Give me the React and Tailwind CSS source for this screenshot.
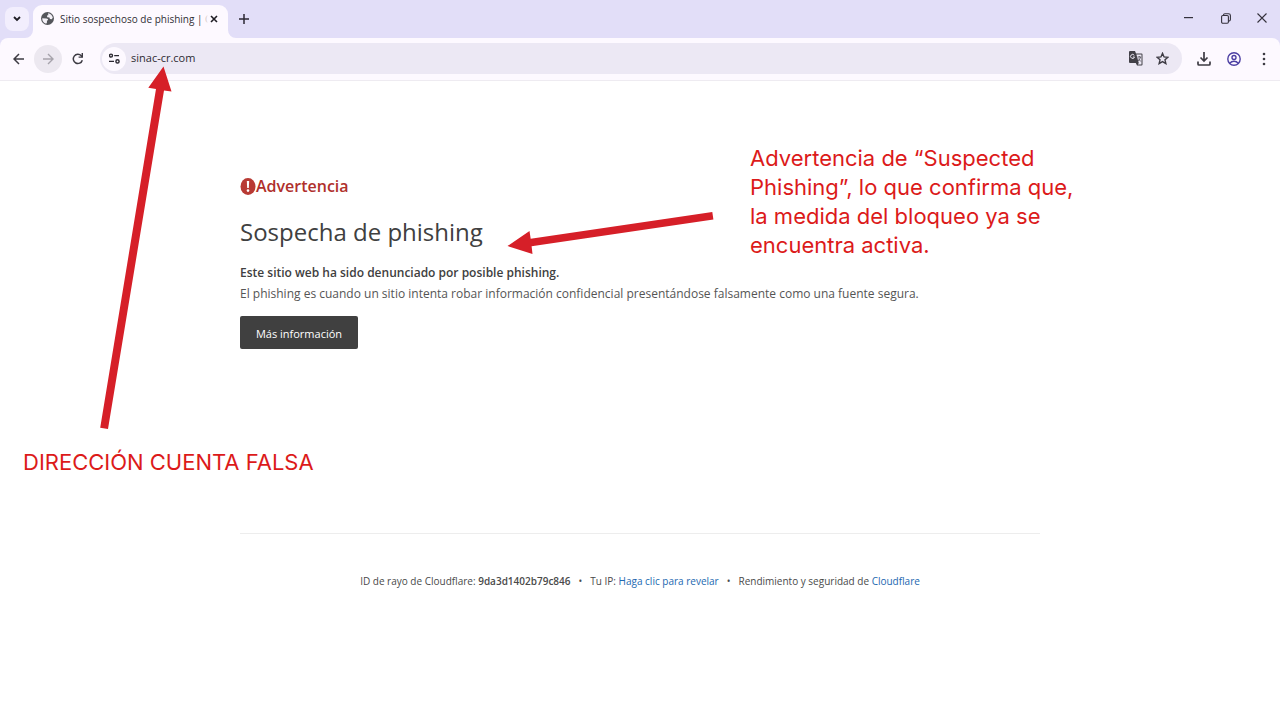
import React from "react";

function TabStrip() {
  return (
    <header className="flex h-[38px] items-end bg-[#e2def8]">
      <div className="flex h-full w-[33px] items-center justify-center pl-px">
        <button aria-label="Buscar pestañas" className="flex size-6 items-center justify-center rounded-lg bg-[#f2eefd]">
          <svg width="8" height="6" viewBox="0 0 8 6" fill="none" stroke="#1f1d24" strokeWidth="1.8"><path d="M1 1l3 3 3-3" /></svg>
        </button>
      </div>
      <div className="relative flex h-[33px] w-[195px] items-center rounded-t-[9px] bg-[#fdf9ff] pr-2 pl-2 pb-1.5">
        <svg className="absolute bottom-0 -left-2" width="8" height="8" viewBox="0 0 8 8" fill="#fdf9ff"><path d="M8 0v8H0a8 8 0 0 0 8-8z" /></svg>
        <svg className="absolute -right-2 bottom-0" width="8" height="8" viewBox="0 0 8 8" fill="#fdf9ff"><path d="M0 0v8h8a8 8 0 0 1-8-8z" /></svg>
        <svg className="mr-1.5 shrink-0" width="13" height="13" viewBox="0 0 24 24">
          <circle cx="12" cy="12" r="12" fill="#54565b" />
          <path d="M2.200 11.500l8 .3c2 .2 3 1.500 2.800 3.200l-2 .8v3.500l-1.500 2.300C5 20.500 2 16.500 2.200 11.500zM13 2.200c4.500.4 8.300 4 8.800 8.600l-2 2.700-3.300-.8-1-2.700-4-.5-.5-3 2.500-.7z" fill="#f4f1f8" />
        </svg>
        <span className="relative min-w-0 flex-1 overflow-hidden text-[10px] leading-4 whitespace-nowrap text-[#302e35]">
          Sitio sospechoso de phishing | C
          <span className="absolute inset-y-0 right-0 w-2 bg-linear-to-r from-transparent to-[#fdf9ff]" />
        </span>
        <button aria-label="Cerrar pestaña" className="flex size-3 shrink-0 items-center justify-center">
          <svg width="8" height="8" viewBox="0 0 8 8" stroke="#1f1d24" strokeWidth="1.6"><path d="M1 1l6 6M7 1L1 7" /></svg>
        </button>
      </div>
      <button aria-label="Nueva pestaña" className="ml-2 flex h-full w-4 items-center justify-center">
        <svg width="10" height="10" viewBox="0 0 10 10" stroke="#2c2933" strokeWidth="1.5"><path d="M5 0v10M0 5h10" /></svg>
      </button>
      <div className="ml-auto flex h-full items-start pt-2 text-[#34313c]">
        <button aria-label="Minimizar" className="flex h-5 w-[37px] items-center justify-center">
          <svg width="9" height="2" viewBox="0 0 9 2" fill="currentColor"><path d="M0 0h9v1.200H0z" /></svg>
        </button>
        <button aria-label="Restaurar" className="flex h-5 w-[37px] items-center justify-center">
          <svg width="10" height="11" viewBox="0 0 10 11" fill="none" stroke="currentColor" strokeWidth="1.100"><rect x=".6" y="2.500" width="6.800" height="7.800" rx="1.200" /><path d="M2.500 2.200C2.500 1.200 3 .7 4 .7h3.500c1.200 0 1.900.7 1.900 1.900v4c0 1-.6 1.600-1.700 1.700" /></svg>
        </button>
        <button aria-label="Cerrar" className="flex h-5 w-9 items-center justify-center">
          <svg width="10" height="10" viewBox="0 0 10 10" stroke="currentColor" strokeWidth="1.100"><path d="M.5.5l9 9M9.500.5l-9 9" /></svg>
        </button>
      </div>
    </header>
  );
}

function Toolbar() {
  return (
    <div className="bg-[#e2def8]">
      <nav className="flex h-[43px] items-center rounded-t-lg border-b border-[#eeebf1] bg-[#fdf9ff] pr-0.5 pb-px pl-1 text-[#3d3b43]">
        <button aria-label="Atrás" className="flex size-7 items-center justify-center">
          <svg width="11" height="12" viewBox="0 0 11 12" fill="none" stroke="currentColor" strokeWidth="1.500"><path d="M11 6H1M6 1L1 6l5 5" /></svg>
        </button>
        <button aria-label="Adelante" className="ml-0.5 flex size-7 items-center justify-center rounded-full bg-[#ece8f0] text-[#a6a3ab]">
          <svg width="11" height="12" viewBox="0 0 11 12" fill="none" stroke="currentColor" strokeWidth="1.400"><path d="M0 6h10M5 1l5 5-5 5" /></svg>
        </button>
        <button aria-label="Volver a cargar" className="ml-0.5 flex size-7 items-center justify-center">
          <svg width="12" height="12" viewBox="0 0 12 12"><path d="M10.300 7.200A4.600 4.600 0 1 1 9.300 2.800L10.400 4" fill="none" stroke="currentColor" strokeWidth="1.500" /><path d="M11 0v4.800H6.600V3.400h3V0z" fill="currentColor" /></svg>
        </button>
        <div className="ml-2 flex h-[31px] min-w-0 flex-1 items-center rounded-full bg-[#ece8f4] pr-3 pl-0.5">
          <button aria-label="Ver información del sitio" className="flex size-6 shrink-0 items-center justify-center rounded-full bg-[#fdf9ff]">
            <svg width="11" height="11" viewBox="0 0 11 11" fill="none" stroke="#2a2830" strokeWidth="1.400"><circle cx="2" cy="2.600" r="1.500" /><path d="M5.200 2.600H10M0 8.400h5" /><circle cx="8.500" cy="8.400" r="1.600" /></svg>
          </button>
          <input aria-label="Dirección" defaultValue="sinac-cr.com" className="ml-[5px] min-w-0 flex-1 bg-transparent text-[11px] text-[#2c2a32] outline-none" />
          <button aria-label="Traducir esta página" className="flex size-5 items-center justify-center">
            <svg width="14" height="15" viewBox="0 0 14 15"><path d="M1 0h5l1 2.500h5.500a1 1 0 0 1 1 1V13.500a1 1 0 0 1-1 1H8L6.800 12H1a1 1 0 0 1-1-1V1a1 1 0 0 1 1-1z" fill="#424047" /><path d="M7.400 3.500h5.100v10H8.800l1-1.500z" fill="#ece8f4" /><path d="M5.300 4.400A2 2 0 1 0 5.500 6H3.900" fill="none" stroke="#ece8f4" strokeWidth="1" /><path d="M8.600 6h3.500M10.300 5v1M11.500 6c-.3 1.800-1.200 3-2.300 4M9.200 7.500l2.600 3" fill="none" stroke="#55525c" strokeWidth=".9" /></svg>
          </button>
          <button aria-label="Añadir a marcadores" className="ml-2 flex size-4 items-center justify-center">
            <svg width="13" height="13" viewBox="0 0 24 24" fill="none" stroke="currentColor" strokeWidth="2.600"><path d="M12 2.500l2.900 6.600 7.100.6-5.400 4.700 1.600 7L12 17.700l-6.200 3.700 1.600-7L2 9.700l7.100-.6z" /></svg>
          </button>
        </div>
        <button aria-label="Descargas" className="ml-2 flex size-7 items-center justify-center">
          <svg width="14" height="14" viewBox="0 0 14 14" fill="none" stroke="currentColor" strokeWidth="1.700"><path d="M7 0v8.500M3.500 5.500L7 9l3.500-3.500M1 9.500V12a1 1 0 0 0 1 1h10a1 1 0 0 0 1-1V9.500" /></svg>
        </button>
        <button aria-label="Perfil" className="ml-0.5 flex size-7 items-center justify-center text-[#4c3fa3]">
          <svg width="14" height="14" viewBox="0 0 14 14" fill="none" stroke="currentColor" strokeWidth="1.400"><circle cx="7" cy="7" r="6.200" /><circle cx="7" cy="5.500" r="2" /><path d="M2.800 11.300C4 9.800 5.300 9.300 7 9.300s3 .5 4.200 2" /></svg>
        </button>
        <button aria-label="Menú" className="ml-0.5 flex size-7 items-center justify-center">
          <svg width="4" height="14" viewBox="0 0 4 14" fill="currentColor"><circle cx="2" cy="2" r="1.300" /><circle cx="2" cy="7" r="1.300" /><circle cx="2" cy="12" r="1.300" /></svg>
        </button>
      </nav>
    </div>
  );
}

function Warning() {
  return (
    <main className="px-60 pt-[93px] text-[#404040]">
      <p className="flex items-center text-base leading-6 font-semibold text-[#b0302c]">
        <svg width="16" height="17" viewBox="0 0 15 17"><ellipse cx="7.500" cy="8.500" rx="7.500" ry="8.500" fill="#b83a34" /><path d="M6.300 3h2.400l-.4 7H6.700z" fill="#fff" /><circle cx="7.500" cy="12.600" r="1.300" fill="#fff" /></svg>
        Advertencia
      </p>
      <h1 className="mt-4 text-2xl leading-9">Sospecha de phishing</h1>
      <p className="mt-3 text-xs leading-[21px] font-semibold">Este sitio web ha sido denunciado por posible phishing.</p>
      <p className="text-xs leading-[21px] text-[#555555]">El phishing es cuando un sitio intenta robar información confidencial presentándose falsamente como una fuente segura.</p>
      <button className="mt-3 h-[33px] w-[118px] rounded-xs bg-[#404040] pt-1 text-[11px] whitespace-nowrap text-white">Más información</button>
    </main>
  );
}

function Footer() {
  return (
    <footer className="mt-[184px] px-60">
      <p className="flex justify-center gap-2 border-t border-[#ededed] pt-[39px] text-[10px] leading-4 whitespace-nowrap text-[#4a4a4a]">
        <span>ID de rayo de Cloudflare: <strong className="font-semibold">9da3d1402b79c846</strong></span>
        <span>•</span>
        <span>Tu IP: <a href="#revelar" className="text-[#2368b0]">Haga clic para revelar</a></span>
        <span>•</span>
        <span>Rendimiento y seguridad de <a href="#cloudflare" className="text-[#2368b0]">Cloudflare</a></span>
      </p>
    </footer>
  );
}

function Annotations() {
  return (
    <div className="pointer-events-none absolute inset-0 font-['Inter',sans-serif] text-[22px] leading-[29px] text-[#dc1a1a]">
      <svg className="absolute top-0 left-0" width="720" height="440" viewBox="0 0 720 440" fill="#d61f28">
        <path d="M163.500 66.500L171.500 91.500L164 90.400L108 429L100.200 427.800L156 89L148.300 87.700z" />
        <path d="M507.500 246L529.500 231L530.700 238.700L712.300 212L713.400 219.600L531.600 246.200L532.500 254z" />
      </svg>
      <p className="absolute top-36 left-[750px] whitespace-nowrap">
        Advertencia de “Suspected<br />Phishing”, lo que confirma que,<br />la medida del bloqueo ya se<br />encuentra activa.
      </p>
      <p className="absolute top-[448px] left-[23px] whitespace-nowrap">DIRECCIÓN CUENTA FALSA</p>
    </div>
  );
}

export default function App() {
  return (
    <div className="relative min-h-screen bg-white font-['Open_Sans',sans-serif]">
      <TabStrip />
      <Toolbar />
      <Warning />
      <Footer />
      <Annotations />
    </div>
  );
}
